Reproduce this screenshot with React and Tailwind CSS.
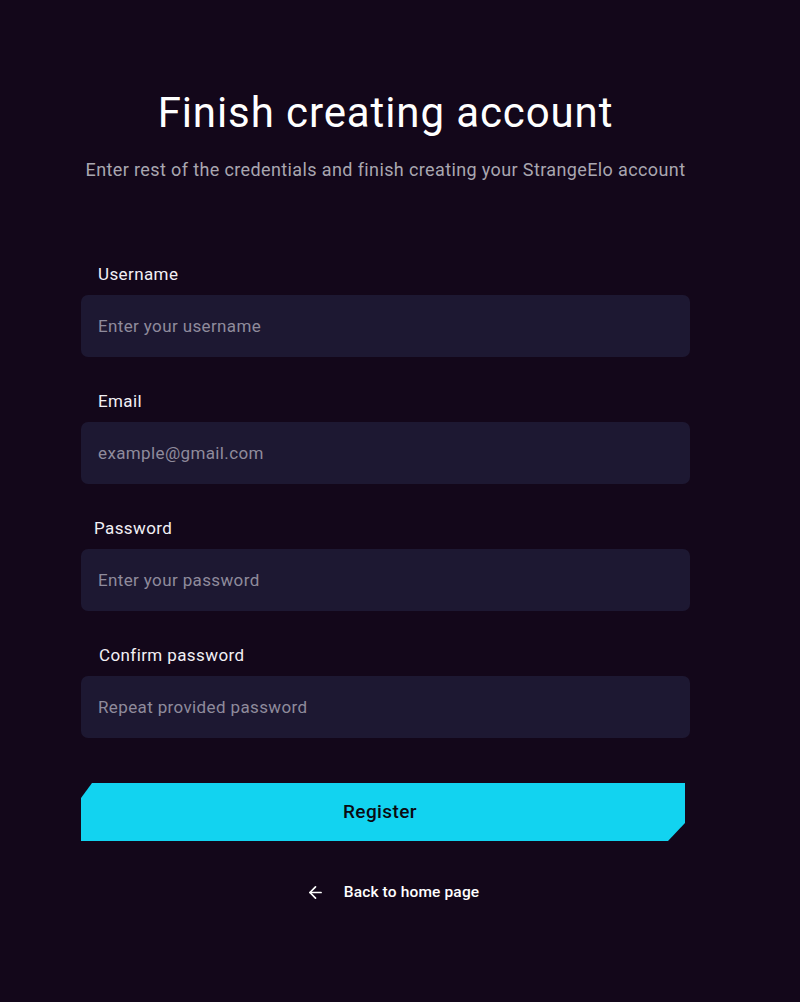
import React from 'react';
import { ArrowLeft } from 'lucide-react';

const fields = [
  { label: 'Username', placeholder: 'Enter your username', type: 'text', labelPad: 'pl-[17px]' },
  { label: 'Email', placeholder: 'example@gmail.com', type: 'email', labelPad: 'pl-[17px]' },
  { label: 'Password', placeholder: 'Enter your password', type: 'password', labelPad: 'pl-[13px]' },
  { label: 'Confirm password', placeholder: 'Repeat provided password', type: 'password', labelPad: 'pl-[18px]' },
];

export default function App() {
  return (
    <div className="min-h-[1002px] w-full bg-[#13071a] font-['Roboto',sans-serif] text-white">
      <div className="ml-[81px] w-[609px] pt-[88px]">
        {/* Heading */}
        <div className="text-center">
          <h1 className="text-[42px] leading-[50px] font-normal tracking-[0.9px] text-white">
            Finish creating account
          </h1>
          <p className="mt-[20px] -mx-[20px] text-[18px] leading-[24px] tracking-[0.38px] text-[#a9a6b0]">
            Enter rest of the credentials and finish creating your StrangeElo account
          </p>
        </div>

        {/* Form */}
        <form className="mt-[80px] flex flex-col gap-[32px]" onSubmit={(e) => e.preventDefault()}>
          {fields.map((f) => (
            <div key={f.label} className="flex flex-col">
              <label className={`${f.labelPad} text-[17px] leading-[24px] tracking-[0.4px] text-[#f2f0f5]`}>
                {f.label}
              </label>
              <input
                type={f.type}
                placeholder={f.placeholder}
                className="mt-[9px] h-[62px] w-full rounded-[7px] bg-[#1d1832] px-[17px] text-[17px] tracking-[0.37px] text-white outline-none placeholder:text-[#8f8b9c]"
              />
            </div>
          ))}

          <button
            type="submit"
            className="mt-[13px] h-[58px] w-[604px] bg-[#12d3f0] text-[19px] font-medium tracking-[0.4px] text-[#0b0b12] pr-[6px] [clip-path:polygon(11px_0,100%_0,100%_calc(100%-18px),calc(100%-17px)_100%,0_100%,0_15px)]"
          >
            Register
          </button>
        </form>

        {/* Back link */}
        <a href="#" className="mt-[40px] ml-[14px] flex items-center justify-center gap-[19px] text-[15.5px] font-medium tracking-[0.15px] text-white">
          <ArrowLeft className="h-[19px] w-[19px]" strokeWidth={2.2} />
          <span>Back to home page</span>
        </a>
      </div>
    </div>
  );
}
